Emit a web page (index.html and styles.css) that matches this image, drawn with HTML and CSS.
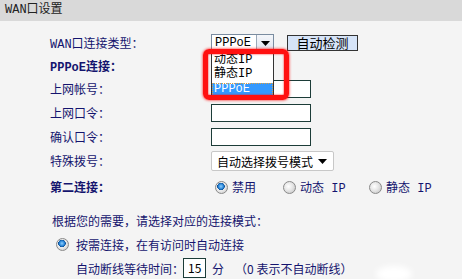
FILE: index.html
```html
<!DOCTYPE html>
<html lang="zh-CN">
<head>
    <meta charset="UTF-8">
    <title>WAN口设置</title>
    <link rel="stylesheet" href="styles.css">
</head>
<body>
    <div class="title">WAN口设置</div>

    <div class="form">
        <div class="row h24">
            <span class="label">WAN口连接类型：</span>
            <div class="field">
                <div class="combo">
                    <span class="combo-text">PPPoE</span>
                    <span class="combo-btn">
                        <svg width="9" height="5" viewBox="0 0 9 5"><path d="M0 0h9L4.5 5z" fill="#000"/></svg>
                    </span>
                    <ul class="droplist">
                        <li>动态IP</li>
                        <li>静态IP</li>
                        <li class="selected">PPPoE</li>
                    </ul>
                    <div class="mark"></div>
                </div>
                <button class="detect">自动检测</button>
            </div>
        </div>

        <div class="row h22">
            <span class="label bold">PPPoE连接：</span>
        </div>

        <div class="row h24">
            <span class="label">上网帐号：</span>
            <input class="text-input" type="text">
        </div>

        <div class="row h24">
            <span class="label">上网口令：</span>
            <input class="text-input" type="password">
        </div>

        <div class="row h24">
            <span class="label">确认口令：</span>
            <input class="text-input" type="password">
        </div>

        <div class="row h24">
            <span class="label">特殊拨号：</span>
            <div class="select-box">
                <span>自动选择拨号模式</span>
                <svg width="9" height="5" viewBox="0 0 9 5"><path d="M0 0h9L4.5 5z" fill="#000"/></svg>
            </div>
        </div>

        <div class="row h28">
            <span class="label bold">第二连接：</span>
            <div class="radios">
                <span class="opt"><span class="radio on"></span>禁用</span>
                <span class="opt"><span class="radio"></span>动态 IP</span>
                <span class="opt"><span class="radio"></span>静态 IP</span>
            </div>
        </div>
    </div>

    <div class="modes">
        <div class="hint">根据您的需要，请选择对应的连接模式：</div>
        <div class="mode">
            <span class="radio on"></span>
            <span>按需连接，在有访问时自动连接</span>
        </div>
        <div class="wait">
            <span>自动断线等待时间：</span>
            <span class="num-input">15</span>
            <span class="unit">分</span>
            <span class="note">（0 表示不自动断线）</span>
        </div>
    </div>

    <div class="smudge"></div>
</body>
</html>
```

FILE: styles.css
```css
body {
    margin: 0;
    width: 462px;
    height: 279px;
    overflow: hidden;
    position: relative;
    background: #f4f4f4;
    font-family: "Liberation Mono", "Noto Sans CJK SC", monospace;
    font-size: 12px;
    color: #14146e;
}

.title {
    height: 21px;
    line-height: 21px;
    padding-left: 5px;
    background: #d9d9d9;
    color: #222;
}

.form {
    padding-top: 10px;
}

.row {
    display: flex;
    align-items: center;
    padding-left: 50px;
}

.h22 { height: 22px; }
.h24 { height: 24px; }
.h28 { height: 28px; }

.label {
    width: 161px;
    flex: none;
    white-space: nowrap;
}

.bold {
    font-weight: bold;
}

.field {
    display: flex;
    align-items: center;
    gap: 13px;
}

/* opened combo box */
.combo {
    position: relative;
    width: 61px;
    height: 16px;
    border: 1px solid #7a8ca0;
    background: #fff;
    display: flex;
    align-items: center;
    color: #000;
}

.combo-text {
    flex: 1;
    padding-left: 3px;
    line-height: 16px;
}

.combo-btn {
    width: 16px;
    height: 16px;
    border-left: 1px solid #9aa8b8;
    background: linear-gradient(#f4f6fa, #dde3ee);
    display: flex;
    align-items: center;
    justify-content: center;
}

.droplist {
    position: absolute;
    left: -1px;
    top: 16px;
    width: 61px;
    margin: 0;
    padding: 1px 0 0;
    list-style: none;
    background: #fff;
    border: 1px solid #333;
    z-index: 2;
}

.droplist li {
    height: 14px;
    line-height: 14px;
    padding-left: 2px;
    color: #000;
}

.droplist li.selected {
    height: 13px;
    line-height: 13px;
    margin-top: 2px;
    background: #3399ff;
    color: #fff;
    outline: 1px dotted #e0a040;
    outline-offset: -1px;
}

.mark {
    position: absolute;
    left: -9px;
    top: 14px;
    width: 76px;
    height: 41px;
    border: 5px solid #ff1010;
    border-radius: 6px;
    box-shadow: 0 0 3px #ff0000, inset 0 0 2px #ff0000;
    filter: blur(0.6px);
    z-index: 3;
}

.detect {
    width: 71px;
    height: 16px;
    padding: 0;
    border: 1px solid #333;
    background: #d6e4f8;
    font-family: "Noto Sans CJK SC", sans-serif;
    font-size: 13px;
    line-height: 14px;
    color: #000;
}

.text-input {
    box-sizing: border-box;
    width: 100px;
    height: 18px;
    margin: 0;
    border: 1px solid #1c3c38;
    background: #fff;
}

.select-box {
    box-sizing: border-box;
    width: 123px;
    height: 20px;
    border: 1px solid #c8c8c8;
    border-radius: 2px;
    background: #fff;
    display: flex;
    align-items: center;
    justify-content: space-between;
    padding: 0 6px 0 5px;
    font-family: "Noto Sans CJK SC", sans-serif;
    font-size: 12px;
    color: #000;
}

.radios {
    display: flex;
    padding-left: 4px;
}

.opt {
    display: flex;
    align-items: center;
    gap: 4px;
}

.opt:nth-child(1) { width: 68px; }
.opt:nth-child(2) { width: 86px; }

.radio {
    box-sizing: border-box;
    width: 13px;
    height: 13px;
    border-radius: 50%;
    border: 1px solid #8a8a8a;
    background: radial-gradient(circle at 40% 40%, #ffffff 0, #e6e6e6 45%, #bdbdbd 100%);
    flex: none;
}

.radio.on {
    background:
        radial-gradient(circle at 45% 40%, #8fd0ff 0, #2a86d8 28%, #0b4f96 40%, transparent 44%),
        radial-gradient(circle at 40% 40%, #ffffff 0, #e6e6e6 55%, #bdbdbd 100%);
}

.modes {
    margin-top: 8px;
    font-family: "Noto Sans CJK SC", sans-serif;
}

.hint {
    height: 24px;
    line-height: 24px;
    padding-left: 52px;
}

.mode {
    height: 23px;
    display: flex;
    align-items: center;
    gap: 7px;
    padding-left: 56px;
}

.wait {
    height: 24px;
    display: flex;
    align-items: center;
    padding-left: 76px;
}

.num-input {
    box-sizing: border-box;
    width: 23px;
    height: 20px;
    margin-left: -1px;
    border: 1px solid #1c3c38;
    background: #fff;
    padding-left: 4px;
    line-height: 18px;
    color: #000;
}

.unit {
    margin-left: 6px;
}

.note {
    margin-left: 11px;
}

.smudge {
    position: absolute;
    left: 376px;
    top: 266px;
    width: 36px;
    height: 16px;
    border-radius: 50%;
    background: #ffffff;
    filter: blur(3px);
}
```
